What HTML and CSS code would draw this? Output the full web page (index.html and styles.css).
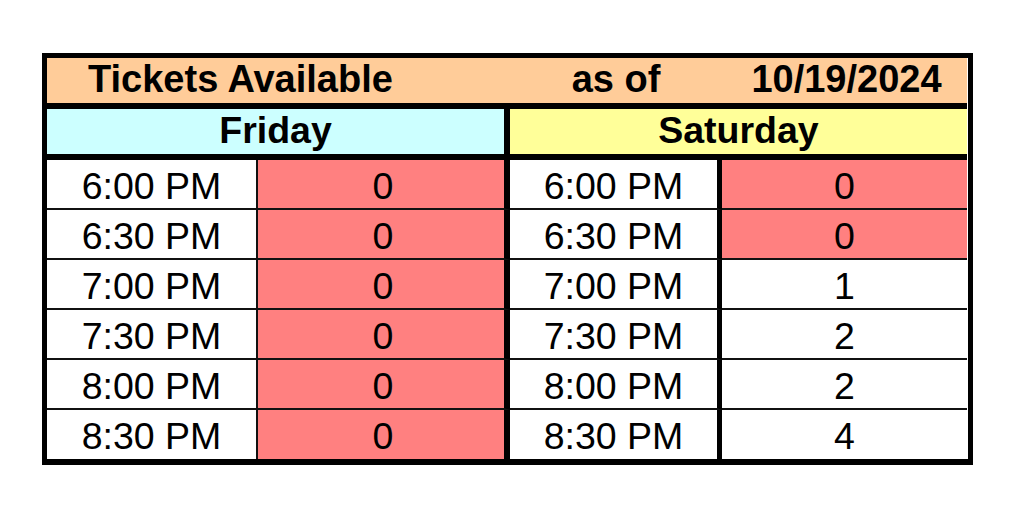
FILE: index.html
```html
<!DOCTYPE html>
<html lang="en">
<head>
<meta charset="utf-8">
<title>Tickets Available</title>
<link rel="stylesheet" href="styles.css">
</head>
<body>
<div class="page">
  <div class="board">
    <div class="title title-main">Tickets Available</div>
    <div class="title title-asof">as of</div>
    <div class="title title-date">10/19/2024</div>

    <div class="day day-fri">Friday</div>
    <div class="day day-sat">Saturday</div>

    <div class="cell time fri">6:00 PM</div><div class="cell val fri sold">0</div><div class="cell time sat">6:00 PM</div><div class="cell val sat sold">0</div>
    <div class="cell time fri">6:30 PM</div><div class="cell val fri sold">0</div><div class="cell time sat">6:30 PM</div><div class="cell val sat sold">0</div>
    <div class="cell time fri">7:00 PM</div><div class="cell val fri sold">0</div><div class="cell time sat">7:00 PM</div><div class="cell val sat">1</div>
    <div class="cell time fri">7:30 PM</div><div class="cell val fri sold">0</div><div class="cell time sat">7:30 PM</div><div class="cell val sat">2</div>
    <div class="cell time fri">8:00 PM</div><div class="cell val fri sold">0</div><div class="cell time sat">8:00 PM</div><div class="cell val sat">2</div>
    <div class="cell time fri last">8:30 PM</div><div class="cell val fri sold last">0</div><div class="cell time sat last">8:30 PM</div><div class="cell val sat last">4</div>
  </div>
</div>
</body>
</html>
```
FILE: styles.css
```css
* { box-sizing: border-box; }
html, body {
  margin: 0;
  padding: 0;
  background: #ffffff;
}
.page {
  width: 1024px;
  height: 512px;
  padding: 53px 0 0 42px;
  font-family: "Liberation Sans", Arial, sans-serif;
  color: #000;
}
.board {
  width: 931px;
  border: 5px solid #000;
  border-bottom-width: 6px;
  display: grid;
  grid-template-columns: 211px 252px 212px 245px;
  grid-template-rows: 51px 51px 50px 50px 50px 50px 50px 49px;
  background: #fff;
}
.title {
  background: #ffcc99;
  border-bottom: 6px solid #000;
  font-weight: bold;
  font-size: 38px;
  line-height: 42px;
  white-space: nowrap;
}
.title-main {
  grid-column: 1 / span 2;
  padding-left: 41px;
}
.title-asof, .title-date {
  text-align: center;
}
.title-date { padding-left: 4px; }
.day {
  grid-column: span 2;
  border-bottom: 6px solid #000;
  font-weight: bold;
  font-size: 37.5px;
  line-height: 43px;
  text-align: center;
}
.day-fri {
  background: #ccffff;
  border-right: 6px solid #000;
}
.day-sat {
  background: #ffff99;
}
.cell {
  font-size: 37.5px;
  line-height: 44px;
  padding-top: 4px;
  text-align: center;
  border-bottom: 2px solid #111;
  white-space: nowrap;
}
.cell.last { border-bottom: 0; }
.time.fri { border-right: 2px solid #111; }
.val.fri { border-right: 6px solid #000; padding-left: 4px; }
.time.sat { border-right: 5px solid #000; }
.sold { background: #ff8080; }
```
